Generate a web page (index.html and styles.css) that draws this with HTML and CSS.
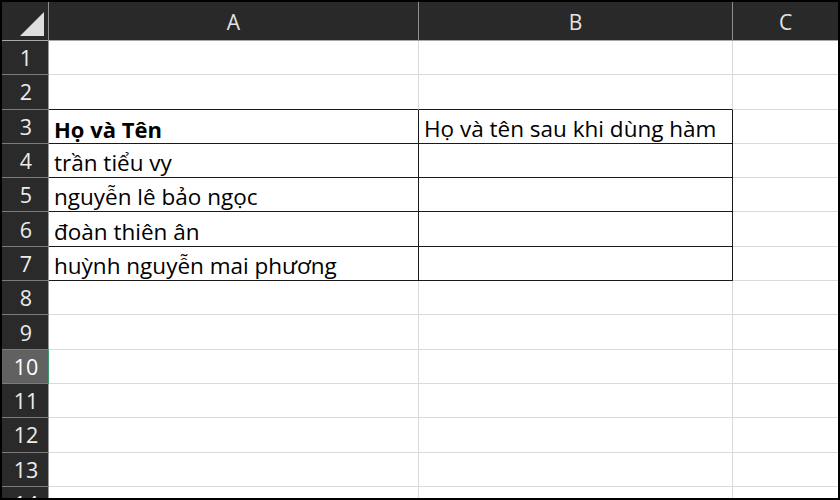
FILE: index.html
```html
<!DOCTYPE html>
<html>
<head>
<meta charset="utf-8">
<link rel="stylesheet" href="styles.css">
</head>
<body>
<div class="frame">
  <div class="sheet">
    <div class="corner"><svg width="26" height="26" viewBox="0 0 26 26"><polygon points="1,25 25,25 25,1" fill="#dedede"/></svg></div>
    <div class="colhead">A</div>
    <div class="colhead">B</div>
    <div class="colhead last">C</div>

    <div class="rowhead">1</div><div class="cell"></div><div class="cell"></div><div class="cell last"></div>
    <div class="rowhead">2</div><div class="cell above"></div><div class="cell above"></div><div class="cell last"></div>
    <div class="rowhead">3</div><div class="cell tb bold">Họ và Tên</div><div class="cell tb">Họ và tên sau khi dùng hàm</div><div class="cell last"></div>
    <div class="rowhead">4</div><div class="cell tb">trần tiểu vy</div><div class="cell tb"></div><div class="cell last"></div>
    <div class="rowhead">5</div><div class="cell tb">nguyễn lê bảo ngọc</div><div class="cell tb"></div><div class="cell last"></div>
    <div class="rowhead">6</div><div class="cell tb">đoàn thiên ân</div><div class="cell tb"></div><div class="cell last"></div>
    <div class="rowhead">7</div><div class="cell tb">huỳnh nguyễn mai phương</div><div class="cell tb"></div><div class="cell last"></div>
    <div class="rowhead">8</div><div class="cell"></div><div class="cell"></div><div class="cell last"></div>
    <div class="rowhead">9</div><div class="cell"></div><div class="cell"></div><div class="cell last"></div>
    <div class="rowhead sel">10</div><div class="cell"></div><div class="cell"></div><div class="cell last"></div>
    <div class="rowhead">11</div><div class="cell"></div><div class="cell"></div><div class="cell last"></div>
    <div class="rowhead">12</div><div class="cell"></div><div class="cell"></div><div class="cell last"></div>
    <div class="rowhead">13</div><div class="cell"></div><div class="cell"></div><div class="cell last"></div>
    <div class="rowhead">14</div><div class="cell"></div><div class="cell"></div><div class="cell last"></div>
  </div>
</div>
</body>
</html>
```
FILE: styles.css
```css
html, body {
  margin: 0;
  padding: 0;
  background: #000;
}
.frame {
  width: 840px;
  height: 500px;
  box-sizing: border-box;
  padding: 2px 2px 2px 2px;
  background: #000;
  overflow: hidden;
}
.sheet {
  width: 836px;
  height: 496px;
  overflow: hidden;
  display: grid;
  grid-template-columns: 47px 370px 314px 105px;
  grid-template-rows: 39px repeat(14, 34.3px);
  background: #fff;
  font-family: "Open Sans", "Noto Sans", sans-serif;
}
.corner {
  background: #292929;
  border-right: 1px solid #8e8e8e;
  border-bottom: 1px solid #a8a8a8;
  box-sizing: border-box;
  display: flex;
  align-items: flex-end;
  justify-content: flex-end;
  padding: 0 3px 3px 0;
}
.corner svg { display: block; }
.colhead {
  background: #292929;
  color: #e4e4e4;
  font-size: 21px;
  display: flex;
  align-items: center;
  justify-content: center;
  padding-top: 2px;
  box-sizing: border-box;
  border-right: 1px solid #8e8e8e;
  border-bottom: 1px solid #a8a8a8;
}
.colhead.last { border-right: none; }
.rowhead {
  background: #2a2a2a;
  color: #ececec;
  font-size: 21.5px;
  display: flex;
  align-items: center;
  justify-content: center;
  box-sizing: border-box;
  border-bottom: 1px solid #7c7c7c;
  border-right: 1px solid #9a9a9a;
  padding-left: 2px;
}
.rowhead.sel {
  background: #616161;
  color: #fff;
  border-right: 1px solid #3f9a6a;
}
.cell {
  box-sizing: border-box;
  border-right: 1px solid #dadada;
  border-bottom: 1px solid #dadada;
  color: #000;
  font-size: 22.5px;
  line-height: 1.2;
  display: flex;
  align-items: flex-end;
  padding: 0 0 1px 5px;
  white-space: nowrap;
  overflow: visible;
}
.cell.last { border-right: none; }
.cell.above { border-bottom: 1px solid #1a1a1a; }
.cell.tb {
  border-right: 1px solid #1a1a1a;
  border-bottom: 1px solid #1a1a1a;
}
.cell.bold { font-weight: 700; font-size: 22px; }
```
